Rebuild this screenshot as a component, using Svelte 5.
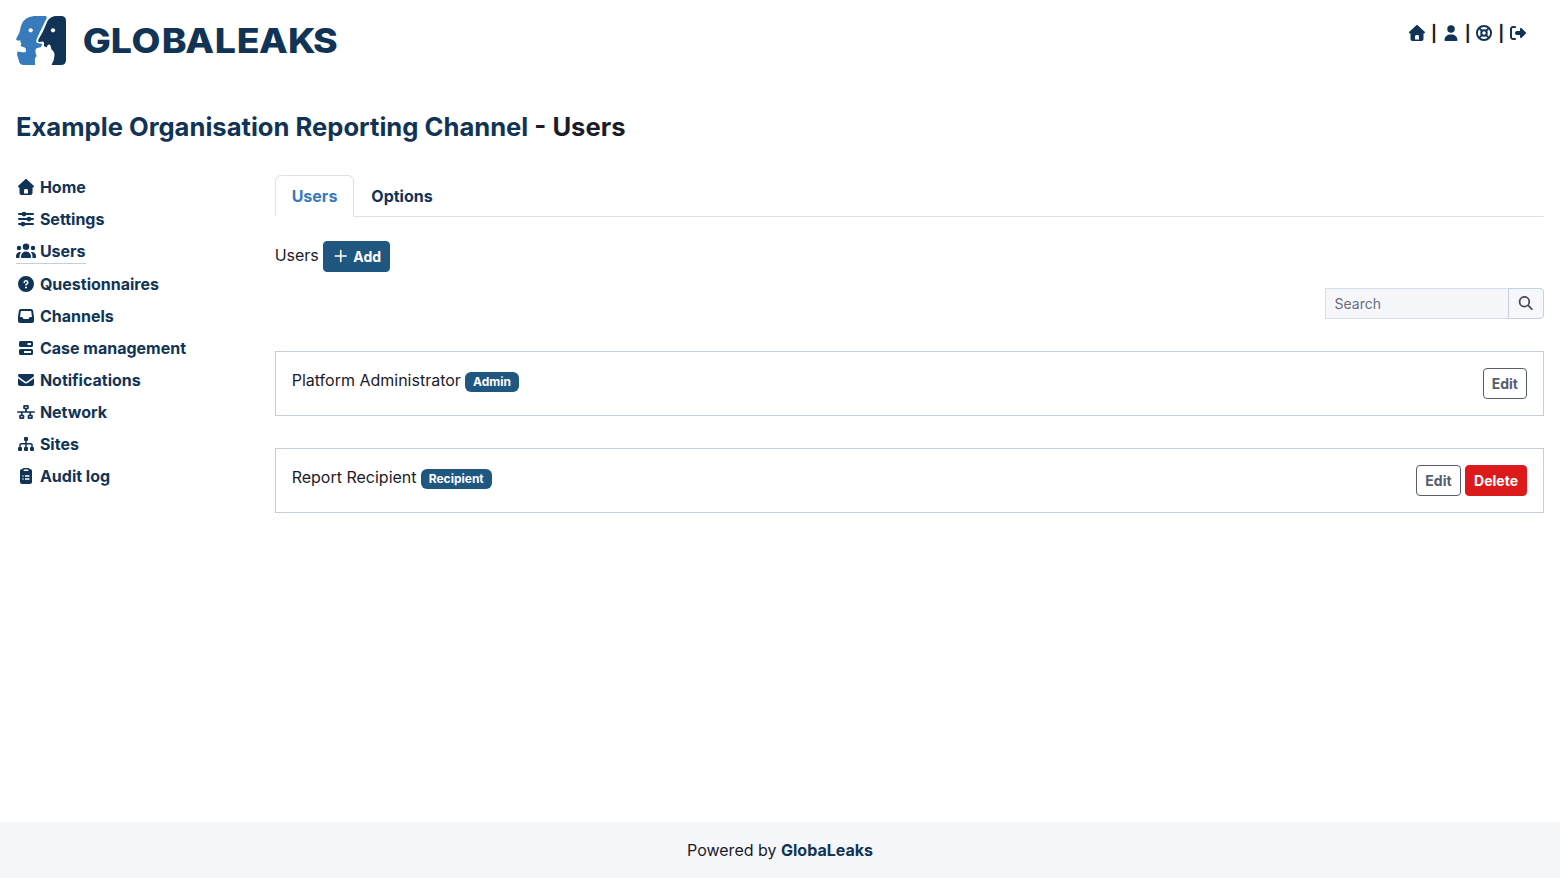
<script>
	const icons = {
		home: {
			w: 512,
			d: 'M277.8 8.6c-12.3-11.4-31.3-11.4-43.5 0l-224 208c-9.6 9-12.8 22.9-8 35.1S18.8 272 32 272l16 0 0 176c0 35.3 28.7 64 64 64l288 0c35.3 0 64-28.7 64-64l0-176 16 0c13.2 0 25-8.1 29.8-20.3s1.6-26.2-8-35.1l-224-208zM240 320l32 0c26.5 0 48 21.5 48 48l0 96-128 0 0-96c0-26.5 21.5-48 48-48z'
		},
		user: {
			w: 448,
			d: 'M224 248a120 120 0 1 0 0-240 120 120 0 1 0 0 240zm-29.7 56C95.8 304 16 383.8 16 482.3 16 498.7 29.3 512 45.7 512l356.6 0c16.4 0 29.7-13.3 29.7-29.7 0-98.5-79.8-178.3-178.3-178.3l-59.4 0z'
		},
		support: {
			w: 512,
			line: 'M256 30a226 226 0 1 1 0 452 226 226 0 1 1 0-452zM256 168a88 88 0 1 1 0 176 88 88 0 1 1 0-176zM100 100l90 90M412 100l-90 90M100 412l90-90M412 412l-90-90',
			stroke: 62
		},
		logout: {
			w: 512,
			d: 'M160 96c17.7 0 32-14.3 32-32s-14.3-32-32-32L96 32C43 32 0 75 0 128L0 384c0 53 43 96 96 96l64 0c17.7 0 32-14.3 32-32s-14.3-32-32-32l-64 0c-17.7 0-32-14.3-32-32l0-256c0-17.7 14.3-32 32-32l64 0zM502.6 278.6c12.5-12.5 12.5-32.8 0-45.3l-128-128c-9.2-9.2-22.9-11.9-34.9-6.9S320 115.1 320 128l0 64-96 0c-35.3 0-64 28.7-64 64s28.7 64 64 64l96 0 0 64c0 12.9 7.8 24.6 19.8 29.6s25.7 2.2 34.9-6.9l128-128z'
		},
		settings: {
			w: 512,
			d: 'M192 20a76 76 0 1 1 0 152 76 76 0 1 1 0-152zM352 180a76 76 0 1 1 0 152 76 76 0 1 1 0-152zM160 340a76 76 0 1 1 0 152 76 76 0 1 1 0-152z',
			line: 'M32 96H480M32 256H480M32 416H480',
			stroke: 64
		},
		users: {
			w: 640,
			d: 'M320 16a104 104 0 1 1 0 208 104 104 0 1 1 0-208zM96 88a72 72 0 1 1 0 144 72 72 0 1 1 0-144zM0 416c0-70.7 57.3-128 128-128 12.8 0 25.2 1.9 36.9 5.4-32.9 36.8-52.9 85.4-52.9 138.6l0 16c0 11.4 2.4 22.2 6.7 32L32 480c-17.7 0-32-14.3-32-32l0-32zm521.3 64c4.3-9.8 6.7-20.6 6.7-32l0-16c0-53.2-20-101.8-52.9-138.6 11.7-3.5 24.1-5.4 36.9-5.4 70.7 0 128 57.3 128 128l0 32c0 17.7-14.3 32-32 32l-86.7 0zM472 160a72 72 0 1 1 144 0 72 72 0 1 1 -144 0zM160 432c0-88.4 71.6-160 160-160s160 71.6 160 160l0 16c0 17.7-14.3 32-32 32l-256 0c-17.7 0-32-14.3-32-32l0-16z'
		},
		question: {
			w: 512,
			d: 'M256 512a256 256 0 1 0 0-512 256 256 0 1 0 0 512zm0-336c-17.7 0-32 14.3-32 32 0 13.3-10.7 24-24 24s-24-10.7-24-24c0-44.2 35.8-80 80-80s80 35.8 80 80c0 47.2-36 67.2-56 74.5l0 3.8c0 13.3-10.7 24-24 24s-24-10.7-24-24l0-8.1c0-20.5 14.8-35.2 30.1-40.2 6.4-2.1 13.2-5.5 18.2-10.3 4.3-4.2 7.7-10 7.7-19.6 0-17.7-14.3-32-32-32zM224 368a32 32 0 1 1 64 0 32 32 0 1 1 -64 0z'
		},
		inbox: {
			w: 512,
			d: 'M91.8 32C59.9 32 32.9 55.4 28.4 86.9L.6 281.2c-.4 3-.6 6-.6 9.1L0 416c0 35.3 28.7 64 64 64l384 0c35.3 0 64-28.7 64-64l0-125.7c0-3-.2-6.1-.6-9.1L483.6 86.9C479.1 55.4 452.1 32 420.2 32L91.8 32zm0 64l328.5 0 27.4 192-59.9 0c-12.1 0-23.2 6.8-28.6 17.7l-14.3 28.6c-5.4 10.8-16.5 17.7-28.6 17.7l-120.4 0c-12.1 0-23.2-6.8-28.6-17.7l-14.3-28.6c-5.4-10.8-16.5-17.7-28.6-17.7L64.4 288 91.8 96z'
		},
		progress: {
			w: 448,
			d: 'M48 32H400a48 48 0 0 1 48 48V176a48 48 0 0 1-48 48H48a48 48 0 0 1-48-48V80a48 48 0 0 1 48-48zM272 96V160H384V96zM48 288H400a48 48 0 0 1 48 48V432a48 48 0 0 1-48 48H48a48 48 0 0 1-48-48V336a48 48 0 0 1 48-48zM160 352V416H384V352z'
		},
		envelope: {
			w: 512,
			d: 'M48 64c-26.5 0-48 21.5-48 48 0 15.1 7.1 29.3 19.2 38.4l208 156c17.1 12.8 40.5 12.8 57.6 0l208-156c12.1-9.1 19.2-23.3 19.2-38.4 0-26.5-21.5-48-48-48L48 64zM0 196L0 384c0 35.3 28.7 64 64 64l384 0c35.3 0 64-28.7 64-64l0-188-198.4 148.8c-34.1 25.6-81.1 25.6-115.2 0L0 196z'
		},
		network: {
			w: 576,
			line: 'M240 60H336Q352 60 352 76V128Q352 144 336 144H240Q224 144 224 128V76Q224 60 240 60zM112 368H192Q208 368 208 384V436Q208 452 192 452H112Q96 452 96 436V384Q96 368 112 368zM384 368H464Q480 368 480 384V436Q480 452 464 452H384Q368 452 368 436V384Q368 368 384 368zM28 256H548M288 144V256M152 256V368M424 256V368',
			stroke: 54
		},
		sitemap: {
			w: 512,
			d: 'M224 32h64a32 32 0 0 1 32 32v64a32 32 0 0 1-32 32h-64a32 32 0 0 1-32-32V64a32 32 0 0 1 32-32zM32 352h64a32 32 0 0 1 32 32v64a32 32 0 0 1-32 32H32a32 32 0 0 1-32-32v-64a32 32 0 0 1 32-32zM224 352h64a32 32 0 0 1 32 32v64a32 32 0 0 1-32 32h-64a32 32 0 0 1-32-32v-64a32 32 0 0 1 32-32zM416 352h64a32 32 0 0 1 32 32v64a32 32 0 0 1-32 32h-64a32 32 0 0 1-32-32v-64a32 32 0 0 1 32-32z',
			line: 'M256 140V370M64 370V280Q64 248 96 248H416Q448 248 448 280V370',
			stroke: 48
		},
		clipboard: {
			w: 384,
			d: 'M311.4 32l8.6 0c35.3 0 64 28.7 64 64l0 352c0 35.3-28.7 64-64 64L64 512c-35.3 0-64-28.7-64-64L0 96C0 60.7 28.7 32 64 32l8.6 0C83.6 12.9 104.3 0 128 0L256 0c23.7 0 44.4 12.9 55.4 32zM136 48c-13.3 0-24 10.7-24 24s10.7 24 24 24l112 0c13.3 0 24-10.7 24-24s-10.7-24-24-24L136 48zM72 256a24 24 0 1 0 48 0 24 24 0 1 0-48 0zM160 232V280H304V232zM72 352a24 24 0 1 0 48 0 24 24 0 1 0-48 0zM160 328V376H304V328z'
		},
		plus: {
			w: 448,
			line: 'M224 56V456M24 256H424',
			stroke: 60
		},
		search: {
			w: 512,
			d: 'M416 208c0 45.9-14.9 88.3-40 122.7L502.6 457.4c12.5 12.5 12.5 32.8 0 45.3s-32.8 12.5-45.3 0L330.7 376C296.3 401.1 253.9 416 208 416 93.1 416 0 322.9 0 208S93.1 0 208 0 416 93.1 416 208zM208 352a144 144 0 1 0 0-288 144 144 0 1 0 0 288z'
		}
	}

	const menu = [
		{ label: 'Home', icon: 'home' },
		{ label: 'Settings', icon: 'settings' },
		{ label: 'Users', icon: 'users' },
		{ label: 'Questionnaires', icon: 'question' },
		{ label: 'Channels', icon: 'inbox' },
		{ label: 'Case management', icon: 'progress' },
		{ label: 'Notifications', icon: 'envelope' },
		{ label: 'Network', icon: 'network' },
		{ label: 'Sites', icon: 'sitemap' },
		{ label: 'Audit log', icon: 'clipboard' }
	]

	const actions = ['home', 'user', 'support', 'logout']

	const users = [
		{ name: 'Platform Administrator', role: 'Admin', removable: false },
		{ name: 'Report Recipient', role: 'Recipient', removable: true }
	]

	let tab = $state('Users')
	let search = $state('')

	let filtered = $derived(users.filter((u) => u.name.toLowerCase().includes(search.toLowerCase())))
</script>

{#snippet icon(name)}
	{@const i = icons[name]}
	<svg class="icon" viewBox="{(i.w - 640) / 2} 0 640 512" aria-hidden="true">
		{#if i.d}
			<path d={i.d} fill="currentColor" fill-rule="evenodd" />
		{/if}
		{#if i.line}
			<path d={i.line} fill="none" stroke="currentColor" stroke-width={i.stroke} stroke-linecap="round" stroke-linejoin="round" />
		{/if}
	</svg>
{/snippet}

<div class="page">
	<header>
		<svg class="logo" viewBox="0 0 322 50" role="img" aria-label="GlobaLeaks">
			<path fill="#377bbc" d="M18 0H29Q31.500 0 30.500 2.500L21.500 21Q19.500 25 21 27L26.500 28L25 31L20 32.500Q18.500 35 20 38.500Q21.500 40 19 42V49H8Q3.500 49 3 45L1 38.500L1.500 35.500L8 36.500Q10.500 36 10 33.500Q9.500 31 5.500 30.500L4.500 29L5.500 27.800L4.500 26.500V24.500H1.200Q-.500 24 .5 22Q4 17 5 10Q7.500 1 18 0Z" />
			<path fill="#113456" d="M39 0H45Q50 0 50 5V44Q50 49 45 49H35.500Q38.500 44 38.500 39Q38.500 35.500 35.500 33.500L34.500 29.500Q33 27.500 31.500 29.500L30.500 31.500L28 30V26.500L27 25.500L23.500 26Q21.500 25.500 22.500 23.500Q27.500 15 30 8.500Q32 1 39 0Z" />
			<circle cx="14.7" cy="14.3" r="2.1" fill="#fff" />
			<circle cx="37" cy="14.3" r="2.1" fill="#fff" />
			<text transform="scale(1.1 1)" x="60.7 86.2 105 132.6 153.900 180.7 200.7 220.9 247.200 270.1" y="37.4">GLOBALEAKS</text>
		</svg>
		<nav class="actions">
			{#each actions as action, n}
				{#if n > 0}<span class="sep">|</span>{/if}
				<a href="#{action}" aria-label={action}>{@render icon(action)}</a>
			{/each}
		</nav>
	</header>

	<h1><a href="#home">Example Organisation Reporting Channel</a> - Users</h1>

	<div class="columns">
		<nav class="menu">
			{#each menu as item}
				<a href="#{item.icon}" class:active={item.label === 'Users'}>
					{@render icon(item.icon)}
					<span>{item.label}</span>
				</a>
			{/each}
		</nav>

		<main>
			<div class="tabs">
				{#each ['Users', 'Options'] as name}
					<button class="tab" class:active={tab === name} onclick={() => (tab = name)}>{name}</button>
				{/each}
			</div>

			<div class="add-row">
				<span>Users</span>
				<button class="btn primary">{@render icon('plus')}<span>Add</span></button>
			</div>

			<div class="search">
				<input type="text" placeholder="Search" bind:value={search} />
				<button aria-label="Search">{@render icon('search')}</button>
			</div>

			{#each filtered as user}
				<div class="card">
					<div class="name">
						<span>{user.name}</span>
						<span class="badge">{user.role}</span>
					</div>
					<div class="buttons">
						<button class="btn outline">Edit</button>
						{#if user.removable}
							<button class="btn danger">Delete</button>
						{/if}
					</div>
				</div>
			{/each}
		</main>
	</div>

	<footer>
		<span>Powered by <a href="#about">GlobaLeaks</a></span>
	</footer>
</div>

<style>
	:global(body) {
		background: #fff;
	}

	.page {
		display: flex;
		flex-direction: column;
		min-height: 100vh;
		font-family: Inter, sans-serif;
		font-size: 16px;
		line-height: 24px;
		color: #1c1b29;
	}

	a {
		color: #113456;
		font-weight: 700;
		text-decoration: none;
	}

	button,
	input {
		font-family: inherit;
		box-sizing: border-box;
		margin: 0;
	}

	button {
		cursor: pointer;
	}

	.icon {
		display: block;
		flex: none;
		width: 1.25em;
		height: 1em;
		overflow: visible;
	}

	header {
		display: flex;
		justify-content: space-between;
		align-items: flex-start;
		height: 50px;
		padding: 16px 32px 0 16px;
	}

	.logo {
		width: 322px;
		height: 50px;
		overflow: visible;
	}

	.logo text {
		font-family: Inter, sans-serif;
		font-size: 34px;
		font-weight: 800;
		fill: #113456;
	}

	.actions {
		display: flex;
		align-items: center;
		height: 34px;
	}

	.sep {
		width: 13.6px;
		text-align: center;
		font-weight: 700;
	}

	h1 {
		margin: 45px 16px 0;
		font-size: 25.6px;
		line-height: 31px;
		font-weight: 700;
	}

	.columns {
		display: grid;
		grid-template-columns: 258.67px 1fr;
		flex: 1;
		padding: 33px 16px 0;
		align-items: start;
	}

	.menu {
		display: flex;
		flex-direction: column;
		align-items: flex-start;
	}

	.menu a {
		display: flex;
		align-items: center;
		gap: 3.9px;
		height: 24px;
		padding: 0;
		margin-bottom: 8px;
	}

	.menu a.active {
		border-bottom: 1px solid #c5cfdc;
	}

	.tabs {
		display: flex;
		border-bottom: 1px solid #dde1ee;
	}

	.tab {
		height: 42px;
		margin-bottom: -1px;
		padding: 0 16px;
		border: 1px solid transparent;
		border-radius: 6px 6px 0 0;
		background: none;
		color: #113456;
		font-size: 16px;
		font-weight: 700;
	}

	.tab.active {
		border-color: #dde1ee #dde1ee #fff;
		background: #fff;
		color: #377bbc;
	}

	.add-row {
		display: flex;
		gap: 4.4px;
		margin-top: 24px;
		line-height: 29px;
	}

	.btn {
		display: flex;
		align-items: center;
		height: 31px;
		padding: 0 8px;
		border: 1px solid;
		border-radius: 4px;
		font-size: 14px;
		line-height: 21px;
		font-weight: 700;
	}

	.primary {
		gap: 3.6px;
		background: #205781;
		border-color: #205781;
		color: #fff;
	}

	.primary .icon,
	.search .icon {
		margin-bottom: 2px;
	}

	.outline {
		background: #fff;
		border-color: #565e6e;
		color: #565e6e;
	}

	.danger {
		background: #dc1a1b;
		border-color: #dc1a1b;
		color: #fff;
	}

	.search {
		display: flex;
		justify-content: flex-end;
		margin-top: 16px;
	}

	.search input {
		width: 184px;
		height: 31px;
		padding: 0 8px 0 8.5px;
		border: 1px solid #d5dfec;
		border-radius: 0;
		background: #f5f7fb;
		font-size: 14px;
		outline: none;
	}

	.search input::placeholder {
		color: #6a6e7b;
	}

	.search button {
		display: flex;
		align-items: center;
		justify-content: center;
		width: 36px;
		height: 31px;
		margin-left: -1px;
		padding: 0;
		border: 1px solid #c5d1e2;
		border-radius: 0 4px 4px 0;
		background: #f5f7fb;
		color: #454c59;
		font-size: 14px;
	}

	.card {
		display: flex;
		justify-content: space-between;
		margin-top: 32px;
		padding: 16px;
		border: 1px solid #c5cfdc;
	}

	.name {
		display: flex;
		gap: 4.4px;
	}

	.badge {
		height: 20px;
		margin-top: 4px;
		padding: 0 7.8px;
		border-radius: 6px;
		background: #205781;
		color: #fff;
		font-size: 12px;
		line-height: 20px;
		font-weight: 700;
	}

	.buttons {
		display: flex;
		gap: 4.5px;
	}

	footer {
		display: flex;
		align-items: center;
		justify-content: center;
		height: 56px;
		background: #f5f7fb;
	}
</style>
